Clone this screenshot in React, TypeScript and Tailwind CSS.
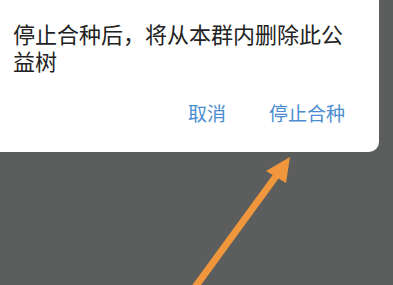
import React from 'react';

const cjk = { fontFamily: '"Noto Sans CJK SC", "Noto Sans", sans-serif' };

const App: React.FC = () => {
  return (
    <div className="relative w-[393px] h-[285px] overflow-hidden bg-[#5c5d5d]" style={cjk}>
      <div className="w-[379px] h-[152px] bg-white rounded-br-[10px] pl-[13px] pr-[20px] pt-[20px]">
        <p className="text-[22px] leading-[27px] text-[#222222]">停止合种后，将从本群内删除此公益树</p>
        <div className="flex justify-end gap-[43px] pr-[14px] mt-[27px]">
          <button className="text-[19px] leading-[24px] text-[#4a8dd0]">取消</button>
          <button className="text-[19px] leading-[24px] text-[#4a8dd0]">停止合种</button>
        </div>
      </div>
      <svg className="absolute left-0 top-0" width="393" height="285" viewBox="0 0 393 285">
        <line x1="193" y1="290" x2="282" y2="168" stroke="#f0973d" strokeWidth="7" />
        <polygon points="290,157 266,171 286,183" fill="#f0973d" />
      </svg>
    </div>
  );
};

export default App;
